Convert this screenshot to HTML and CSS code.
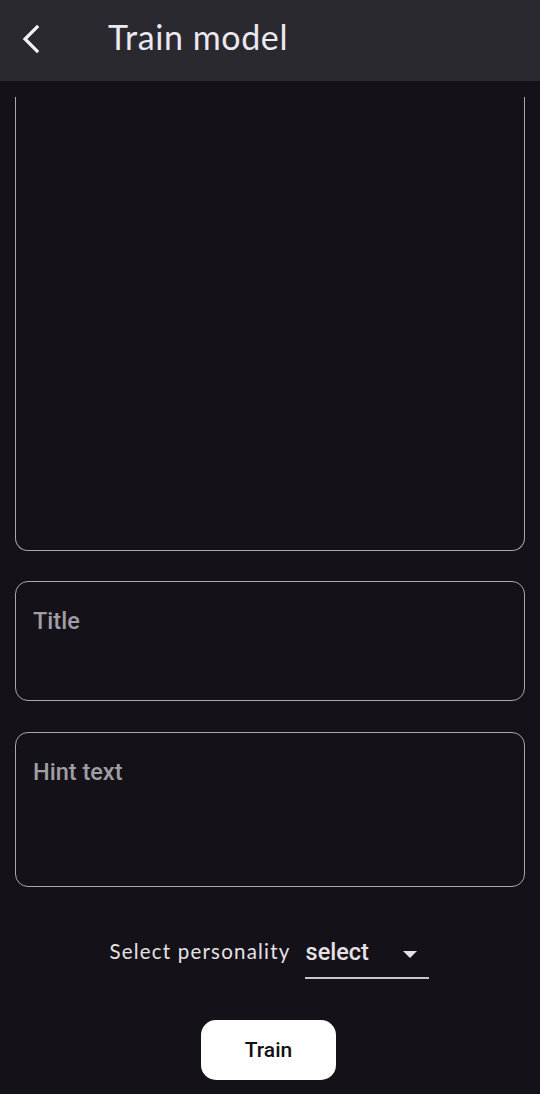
FILE: index.html
```html
<!DOCTYPE html>
<html>
<head>
<meta charset="utf-8">
<link rel="stylesheet" href="styles.css">
</head>
<body>
<div class="screen">
  <header class="appbar">
    <svg class="back" width="22" height="30" viewBox="0 0 22 30"><path d="M17 3 L5 15 L17 27" fill="none" stroke="#f4f1f6" stroke-width="3.2" stroke-linecap="square"/></svg>
    <h1 class="title">Train model</h1>
  </header>
  <main class="content">
    <div class="field big"></div>
    <div class="field title-field"><span class="hint">Title</span></div>
    <div class="field hint-field"><span class="hint">Hint text</span></div>
    <div class="select-row">
      <span class="select-label">Select personality</span>
      <div class="dropdown">
        <span class="dropdown-value">select</span>
        <svg width="14" height="8" viewBox="0 0 14 8"><path d="M0 0 L14 0 L7 7 Z" fill="#e6e1e5"/></svg>
      </div>
    </div>
    <div class="btn-row"><button class="train">Train</button></div>
  </main>
</div>
</body>
</html>
```

FILE: styles.css
```css
html, body {
  margin: 0;
  padding: 0;
  background: #141218;
}
.screen {
  width: 540px;
  height: 1094px;
  overflow: hidden;
  display: flex;
  flex-direction: column;
  font-family: Roboto, "Noto Sans", sans-serif;
}
.appbar {
  height: 81px;
  background: #2b2930;
  display: flex;
  align-items: flex-start;
  flex-shrink: 0;
  box-sizing: border-box;
  padding-top: 17px;
}
.back {
  margin-left: 20px;
  margin-top: 7px;
}
.title {
  margin: 0 0 0 66px;
  font-family: Lato, sans-serif;
  font-weight: 400;
  font-size: 34px;
  line-height: 40px;
  color: #ece8f0;
  letter-spacing: 0.6px;
}
.content {
  display: flex;
  flex-direction: column;
  padding: 16px 15px 0 15px;
}
.field {
  border: 1.5px solid #aaa6ae;
  border-radius: 13px;
  box-sizing: border-box;
  padding: 25px 17px 0 17px;
}
.field.big {
  height: 454px;
  border-top: none;
  border-top-left-radius: 0;
  border-top-right-radius: 0;
  border-bottom-left-radius: 13px;
  border-bottom-right-radius: 13px;
}
.title-field {
  margin-top: 30px;
  height: 120px;
}
.hint-field {
  margin-top: 31px;
  height: 155px;
}
.hint {
  font-size: 23.5px;
  font-weight: 500;
  color: #a09da3;
}
.select-row {
  margin-top: 47px;
  display: flex;
  justify-content: center;
  align-items: flex-start;
  gap: 14px;
  padding-right: 2px;
}
.select-label {
  font-family: Lato, sans-serif;
  font-size: 20.5px;
  color: #e6e1e5;
  letter-spacing: 1.2px;
  margin-top: 5px;
}
.dropdown {
  width: 124px;
  height: 45px;
  border-bottom: 2px solid #c9c5cc;
  display: flex;
  align-items: flex-start;
  justify-content: space-between;
  padding-right: 12px;
  padding-top: 4px;
  box-sizing: border-box;
}
.dropdown-value {
  font-size: 23.5px;
  font-weight: 500;
  color: #e6e1e5;
  margin-left: 1px;
}
.dropdown svg {
  margin-top: 13px;
}
.btn-row {
  display: flex;
  justify-content: center;
  margin-top: 41px;
  padding-right: 3px;
}
.train {
  width: 135px;
  height: 60px;
  border: none;
  border-radius: 15px;
  background: #ffffff;
  color: #111;
  font-family: Roboto, sans-serif;
  font-weight: 500;
  font-size: 21px;
}
```
